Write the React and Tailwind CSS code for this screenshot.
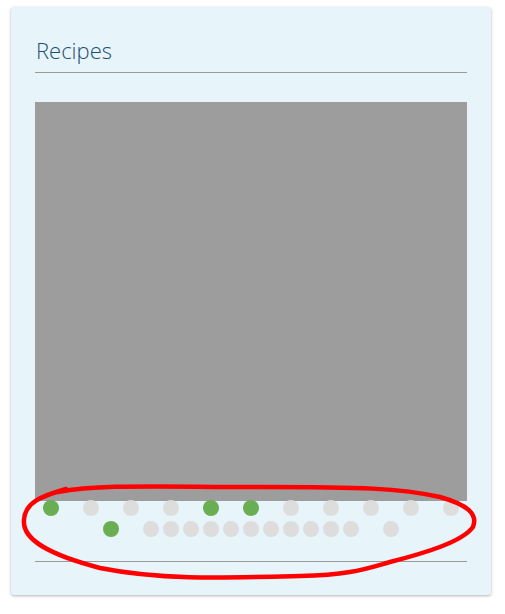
const ROW_ONE = [
  { col: 1, on: true },
  { col: 3 },
  { col: 5 },
  { col: 7 },
  { col: 9, on: true },
  { col: 11, on: true },
  { col: 13 },
  { col: 15 },
  { col: 17 },
  { col: 19 },
  { col: 21 },
]

const ROW_TWO = [
  { col: 4, on: true },
  { col: 6 },
  { col: 7 },
  { col: 8 },
  { col: 9 },
  { col: 10 },
  { col: 11 },
  { col: 12 },
  { col: 13 },
  { col: 14 },
  { col: 15 },
  { col: 16 },
  { col: 18 },
]

function Dot({ col, on, row }) {
  return (
    <span
      className={`block w-4 h-4 rounded-full ${on ? 'bg-[#6aae53]' : 'bg-[#dddddd]'}`}
      style={{ gridColumnStart: col, gridRowStart: row }}
    />
  )
}

export default function App() {
  return (
    <div className="relative w-[505px] h-[614px] bg-white pt-[7px] pl-[11px]" style={{ fontFamily: '"Open Sans", "Noto Sans", sans-serif' }}>
      <div className="w-[480px] h-[588px] bg-[#e7f4f9] rounded-[3px] shadow-[0_1px_3px_rgba(0,0,0,0.3)] px-6 pt-[28px]">
        {/* header */}
        <div className="border-b border-[#9a9a9a] pb-[7px]">
          <h2 className="text-[22px] leading-[30px] font-light text-[#1a4f72] pl-px">Recipes</h2>
        </div>

        {/* chart area */}
        <div className="mt-[29px] h-[399px] bg-[#9d9d9d]" />

        {/* timeline dots */}
        <div className="-mt-px grid grid-cols-[repeat(21,20px)] grid-rows-[16px_16px] gap-y-[5px] justify-items-center pl-[6px]">
          {ROW_ONE.map((d, i) => (
            <Dot key={`a${i}`} {...d} row={1} />
          ))}
          {ROW_TWO.map((d, i) => (
            <Dot key={`b${i}`} {...d} row={2} />
          ))}
        </div>

        <div className="mt-[24px] border-b border-[#9a9a9a]" />
      </div>

      {/* hand-drawn annotation */}
      <svg className="absolute inset-0 pointer-events-none" width="505" height="614" viewBox="0 0 505 614">
        <path
          d="M 58 492 C 100 484, 160 487, 260 487 S 400 488, 440 497 C 468 505, 478 514, 473 527 C 462 542, 425 553, 390 562 C 365 569, 350 575, 300 576 C 220 578, 160 580, 100 568 C 50 555, 22 540, 24 520 C 25 502, 42 496, 66 489"
          fill="none"
          stroke="#ff0000"
          strokeWidth="4.5"
          strokeLinecap="round"
          strokeLinejoin="round"
        />
      </svg>
    </div>
  )
}
